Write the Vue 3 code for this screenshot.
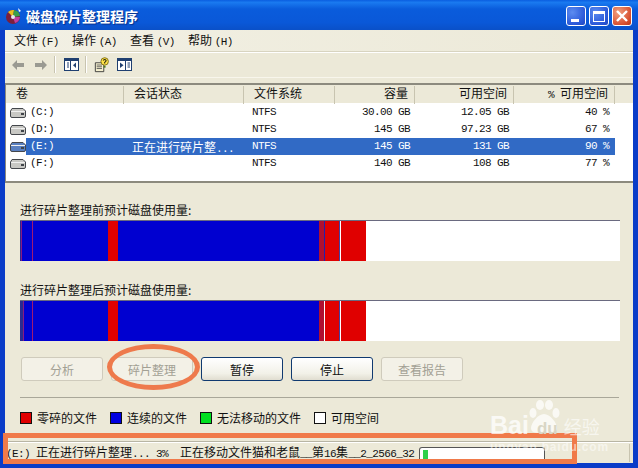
<script setup>
const columns = [
  { label: '卷', cls: 'left' },
  { label: '会话状态', cls: 'left' },
  { label: '文件系统', cls: 'left' },
  { label: '容量', cls: 'right' },
  { label: '可用空间', cls: 'right' },
  { label: '可用空间', pre: '% ', cls: 'right' },
]
const rows = [
  { name: '(C:)', state: '', fs: 'NTFS', cap: '30.00 GB', free: '12.05 GB', pct: '40 %' },
  { name: '(D:)', state: '', fs: 'NTFS', cap: '145 GB', free: '97.23 GB', pct: '67 %' },
  { name: '(E:)', state: '正在进行碎片整', dots: '...', fs: 'NTFS', cap: '145 GB', free: '131 GB', pct: '90 %', selected: true },
  { name: '(F:)', state: '', fs: 'NTFS', cap: '140 GB', free: '108 GB', pct: '77 %' },
]
const segmentsA = [
  [1, '#2a2a90'], [1, '#8a1a80'], [10, '#0000d0'], [1, '#a01a70'], [75, '#0000d0'], [10, '#e00000'],
  [201, '#0000d0'], [5, '#b01030'], [1, '#2020b0'], [14, '#e00000'], [1, '#4040a0'], [1, '#ffffff'], [25, '#e00000'],
]
const segmentsB = [
  [3, '#2a2a90'], [1, '#8a1a80'], [8, '#0000d0'], [1, '#a01a70'], [75, '#0000d0'], [10, '#e00000'],
  [201, '#0000d0'], [5, '#b01030'], [1, '#ffffff'], [14, '#e00000'], [1, '#4040a0'], [1, '#ffffff'], [25, '#e00000'],
]
const graphs = [
  { label: '进行碎片整理前预计磁盘使用量:', segments: segmentsA },
  { label: '进行碎片整理后预计磁盘使用量:', segments: segmentsB },
]
const buttons = [
  { label: '分析', off: true }, { label: '碎片整理', off: true },
  { label: '暂停' }, { label: '停止' }, { label: '查看报告', off: true },
]
const legend = [
  { label: '零碎的文件', color: '#e00000' }, { label: '连续的文件', color: '#0000e0' },
  { label: '无法移动的文件', color: '#00e020' }, { label: '可用空间', color: '#ffffff' },
]
</script>

<template>
  <div class="window">
    <header class="title">
      <svg class="appicon" width="18" height="18" viewBox="0 0 18 18">
        <circle cx="8" cy="10" r="7" fill="#7a1f3d" />
        <path d="M8 10 L3 5 A7 7 0 0 1 9 3 Z" fill="#e8c020" />
        <path d="M8 10 L9 3 A7 7 0 0 1 15 9 Z" fill="#3aa04a" />
        <path d="M8 10 L15 10 A7 7 0 0 1 10 16 Z" fill="#c040a0" />
        <circle cx="8" cy="10" r="2" fill="#e8e8f0" />
        <path d="M13 1 L16 4 L14 5 Z" fill="#fff" />
      </svg>
      <span class="title-text">磁盘碎片整理程序</span>
      <div class="controls">
        <div class="ctl blue"><i class="min"></i></div>
        <div class="ctl blue"><i class="max"></i></div>
        <div class="ctl red">
          <svg width="14" height="14" viewBox="0 0 14 14"><path d="M2 2 L12 12 M12 2 L2 12" stroke="#fff" stroke-width="2.4" /></svg>
        </div>
      </div>
    </header>

    <div class="frame">
      <nav class="menu">
        <span>文件 <small>(F)</small></span>
        <span>操作 <small>(A)</small></span>
        <span>查看 <small>(V)</small></span>
        <span>帮助 <small>(H)</small></span>
      </nav>
      <div class="toolbar">
        <svg width="14" height="12" viewBox="0 0 14 12"><path d="M1 6 L6 1 V4 H13 V8 H6 V11 Z" fill="#9a9a92" /></svg>
        <svg class="next" width="14" height="12" viewBox="0 0 14 12"><path d="M13 6 L8 1 V4 H1 V8 H8 V11 Z" fill="#9a9a92" /></svg>
        <b class="tsep first"></b>
        <svg width="15" height="13" viewBox="0 0 15 13">
          <rect x="0.5" y="0.5" width="14" height="12" fill="#fff" stroke="#1f3f70" />
          <rect x="1" y="1" width="13" height="2" fill="#1f3f70" />
          <path d="M6.5 1 V12" stroke="#1f3f70" />
          <path d="M3 5 H5 M3 7 H5 M3 9 H5" stroke="#1f3f70" />
          <path d="M12 4.5 V10 L9 7.2 Z" fill="#1f3f70" />
        </svg>
        <b class="tsep second"></b>
        <svg width="16" height="16" viewBox="0 0 18 18">
          <path d="M1.5 6.5 H11 V16.5 H1.5 Z" fill="#f6f1d0" stroke="#333" />
          <path d="M3 9 H9 M3 11 H9 M3 13 H9" stroke="#555" />
          <circle cx="12" cy="5" r="4.2" fill="#ffe24a" stroke="#7a6a10" />
          <path d="M10.4 4 Q12 1.8 13.6 3.8 Q13.6 5 12 6 V7.4" fill="none" stroke="#2a2a10" stroke-width="1.2" />
          <path d="M11 10 H13 V12 H11 Z" fill="#4a7a20" />
        </svg>
        <svg class="last" width="15" height="13" viewBox="0 0 15 13">
          <rect x="0.5" y="0.5" width="14" height="12" fill="#fff" stroke="#1f3f70" />
          <rect x="1" y="1" width="13" height="2" fill="#1f3f70" />
          <path d="M8.5 1 V12" stroke="#1f3f70" />
          <path d="M10.5 5 H13 M10.5 7 H13 M10.5 9 H13" stroke="#1f3f70" />
          <path d="M3 4.5 V10 L6.5 7.2 Z" fill="#1f3f70" />
        </svg>
      </div>

      <section class="list">
        <div class="head">
          <div v-for="c in columns" :key="c.label + c.pre" class="hcell" :class="c.cls"><span v-if="c.pre" class="mono">{{ c.pre }}</span>{{ c.label }}</div>
        </div>
        <div class="rows">
          <div v-for="r in rows" :key="r.name" class="row" :class="{ selected: r.selected }">
            <div class="namecell">
              <svg class="drive" width="16" height="10" viewBox="0 0 16 10">
                <path d="M2 0.5 H13 L15.5 3 V8 Q15.5 9.5 14 9.5 H2 Q0.5 9.5 0.5 8 V3 Z" :fill="r.selected ? '#5a80c0' : '#c8c8c4'" stroke="#44474c" />
                <path d="M1 3.5 H15" stroke="#f0f0f0" />
                <rect x="11" y="5" width="3" height="2" fill="#40444a" />
              </svg>
              <span class="mono pick">{{ r.name }}</span>
            </div>
            <div class="cell sel state">{{ r.state }}<span v-if="r.dots" class="mono">{{ r.dots }}</span></div>
            <div class="cell sel mono fs">{{ r.fs }}</div>
            <div class="cell sel mono num">{{ r.cap }}</div>
            <div class="cell sel mono num">{{ r.free }}</div>
            <div class="cell sel mono num pctn">{{ r.pct }}</div>
          </div>
        </div>
      </section>

      <section class="panel">
        <div v-for="g in graphs" :key="g.label" class="graph">
          <div class="glabel">{{ g.label }}</div>
          <div class="bar">
            <span v-for="(s, i) in g.segments" :key="i" :style="{ width: s[0] + 'px', background: s[1] }"></span>
          </div>
        </div>
        <div class="buttons">
          <button v-for="b in buttons" :key="b.label" :class="{ off: b.off }" type="button">{{ b.label }}</button>
        </div>
        <hr class="rule" />
        <div class="legend">
          <div v-for="l in legend" :key="l.label" class="key">
            <i :style="{ background: l.color }"></i>{{ l.label }}
          </div>
        </div>
      </section>

      <footer class="status">
        <span class="stext"><span class="mono">(E:) </span>正在进行碎片整理<span class="mono">... 3%&nbsp;&nbsp;</span>正在移动文件猫和老鼠<span class="mono">__</span>第<span class="mono">16</span>集<span class="mono">__2_2566_32</span></span>
        <div class="progress"><i></i></div>
        <b class="grip"></b>
      </footer>
    </div>

    <div class="ring"></div>
    <div class="box"></div>
    <div class="mark">
      <svg class="paw" width="32" height="34" viewBox="0 0 32 34" fill="#fff" fill-opacity="0.72">
        <ellipse cx="5" cy="13" rx="3.5" ry="5" />
        <ellipse cx="12" cy="5" rx="4" ry="5" />
        <ellipse cx="21" cy="5" rx="4" ry="5" />
        <ellipse cx="28" cy="13" rx="3.5" ry="5" />
        <path d="M16 14 C22 14 29 23 29 28 C29 34 21 33 16 32 C11 33 3 34 3 28 C3 23 10 14 16 14 Z" />
      </svg>
      <div class="brand"><span class="bai">Bai</span><span class="du">du</span><span class="jy">经验</span></div>
      <div class="url">jingyan.baidu.com</div>
    </div>
  </div>
</template>

<style scoped>
.window {
  position: relative;
  width: 638px;
  height: 468px;
  overflow: hidden;
  display: flex;
  flex-direction: column;
  background: #0a3cc8;
  font: 12px "Noto Sans CJK SC", "Liberation Sans", sans-serif;
  color: #111;
}
.title {
  height: 30px;
  flex: none;
  box-sizing: border-box;
  display: flex;
  align-items: center;
  padding: 2px 6px 0 5px;
  background: linear-gradient(#0a5ee0 0, #1a7af0 8%, #0a5cdc 30%, #0a58d8 75%, #0a50c8 100%);
}
.appicon { margin-right: 3px; }
.title-text {
  font-size: 14px;
  font-weight: 700;
  color: #fff;
  text-shadow: 1px 1px 1px #08308a;
}
.controls { margin-left: auto; display: flex; gap: 3px; }
.ctl {
  width: 20px;
  height: 20px;
  box-sizing: border-box;
  border: 1px solid #fff;
  border-radius: 3px;
  position: relative;
  display: flex;
  align-items: center;
  justify-content: center;
}
.blue { background: radial-gradient(circle at 30% 30%, #5c8cf0, #2a58d8 70%, #2048c0); }
.red { background: radial-gradient(circle at 30% 30%, #f0a080, #d85030 70%, #b83818); }
.min { position: absolute; left: 4px; bottom: 3px; width: 8px; height: 3px; background: #fff; }
.max { width: 12px; height: 11px; box-sizing: border-box; border: 1px solid #fff; border-top-width: 3px; }
.frame {
  flex: 1;
  min-height: 0;
  margin: 0 5px 5px 5px;
  display: flex;
  flex-direction: column;
  background: #ece9d8;
}
.menu {
  height: 22px;
  flex: none;
  box-sizing: border-box;
  display: flex;
  align-items: center;
  padding: 0 0 3px 9px;
  background: linear-gradient(90deg, #f2f0e4, #ece9d8);
  border-bottom: 1px solid #d8d4c0;
  box-shadow: 0 1px 0 #fff;
}
.menu span { width: 58px; flex: none; white-space: nowrap; }
.menu small { font: 11px "Liberation Mono", monospace; letter-spacing: -0.6px; }
.toolbar {
  height: 25px;
  flex: none;
  box-sizing: border-box;
  margin-top: 1px;
  display: flex;
  align-items: center;
  padding-left: 6px;
  padding-bottom: 1px;
  border-bottom: 1px solid #f8f6ec;
}
.next { margin-left: 9px; }
.tsep { width: 1px; height: 17px; background: #c8c4b0; box-shadow: 1px 0 0 #fff; }
.tsep.first { margin: 0 9px 0 6px; }
.tsep.second { margin: 0 8px 0 6px; }
.last { margin-left: 7px; }
.list {
  height: 100px;
  flex: none;
  margin-top: 5px;
  box-sizing: border-box;
  border-top: 2px solid #8c8a7e;
  border-left: 1px solid #8c8a7e;
  border-bottom: 2px solid #8c8a7e;
  background: #fff;
  display: flex;
  flex-direction: column;
}
.head {
  height: 18px;
  flex: none;
  display: grid;
  grid-template-columns: 118px 120px 91px 80px 99px 101px;
  background: #ece9d8;
}
.hcell {
  border-right: 1px solid #c8c4b0;
  margin: 1px 0 3px;
  line-height: 14px;
  white-space: nowrap;
}
.hcell.left { padding-left: 10px; }
.hcell.right { text-align: right; padding-right: 6px; }
.rows { padding-top: 1px; }
.row {
  height: 17px;
  display: grid;
  grid-template-columns: 118px 120px 91px 80px 99px 101px;
  align-items: center;
  line-height: 17px;
  width: 609px;
}
.namecell { display: flex; align-items: center; padding-left: 4px; height: 17px; }
.drive { flex: none; }
.pick { flex: 1; padding-left: 4px; height: 17px; }
.cell { height: 17px; white-space: nowrap; }
.state { padding-left: 8px; }
.fs { padding-left: 8px; }
.num { text-align: right; padding-right: 5px; }
.pctn { padding-right: 6px; }
.selected .pick { background: #316ac5; color: #fff; }
.selected .sel { background: #316ac5; color: #fff; }
.mono { font: 11px/17px "Liberation Mono", monospace; letter-spacing: -0.6px; white-space: pre; }
.panel {
  flex: 1;
  min-height: 0;
  padding: 18px 14px 0 15px;
  display: flex;
  flex-direction: column;
}
.graph { flex: none; }
.graph + .graph { margin-top: 20px; }
.glabel { height: 19px; line-height: 18px; white-space: nowrap; }
.bar {
  height: 41px;
  width: 600px;
  background: #fff;
  display: flex;
  border-top: 1px solid #6a6a80;
  box-sizing: border-box;
}
.bar span { flex: none; height: 100%; }
.buttons { display: flex; gap: 8px; margin-top: 16px; padding-left: 1px; }
.buttons button {
  width: 82px;
  height: 24px;
  padding: 0;
  border: 1px solid #103a70;
  border-radius: 3px;
  background: linear-gradient(#fff, #f2f1e8 70%, #e0ddd0);
  font: 12px "Noto Sans CJK SC", sans-serif;
  color: #111;
}
.buttons .off {
  border-color: #cfcbbc;
  background: #f3f1e7;
  color: #a2a094;
}
.rule {
  margin: 16px 0 0;
  height: 1px;
  width: 599px;
  border: 0;
  background: #a9a799;
}
.legend { display: flex; margin-top: 12px; }
.key { display: flex; align-items: center; gap: 5px; line-height: 16px; margin-right: 13px; white-space: nowrap; }
.key i { width: 12px; height: 12px; box-sizing: border-box; border: 1px solid #111; flex: none; }
.status {
  height: 21px;
  flex: none;
  box-sizing: border-box;
  display: flex;
  align-items: center;
  border-top: 1px solid #fff;
  box-shadow: 0 -1px 0 #b8b5a4;
  position: relative;
  white-space: nowrap;
}
.stext { padding-left: 1px; width: 413px; flex: none; line-height: 17px; }
.progress {
  width: 126px;
  height: 15px;
  margin: 3px 0 0 0;
  flex: none;
  box-sizing: border-box;
  border: 1px solid #555;
  border-bottom: 0;
  border-radius: 3px 3px 0 0;
  background: #fff;
  padding: 2px 3px;
}
.progress i { display: block; width: 5px; height: 100%; background: #2ed04a; }
.grip { position: absolute; right: 3px; top: 1px; bottom: 1px; width: 1px; background: #c8c4b0; }
.ring {
  position: absolute;
  left: 107px;
  top: 344px;
  width: 93px;
  height: 46px;
  box-sizing: border-box;
  border: 5px solid #ee7a4c;
  border-radius: 50%;
}
.box {
  position: absolute;
  left: 3px;
  top: 433px;
  width: 574px;
  height: 31px;
  box-sizing: border-box;
  border: 5px solid #f07a4a;
}
.mark {
  position: absolute;
  left: 488px;
  top: 398px;
  width: 120px;
  height: 60px;
  color: #fff;
  pointer-events: none;
}
.paw { position: absolute; left: 40px; top: 2px; }
.brand { position: absolute; left: 2px; top: 17px; height: 20px; line-height: 20px; display: flex; align-items: baseline; }
.bai { font: 700 25px/20px "Liberation Sans", sans-serif; color: rgba(255, 255, 255, 0.75); }
.du { margin-left: 8px; font: 700 17px/20px "Liberation Sans", sans-serif; color: #d9d6c5; }
.jy { margin-left: 6px; font-size: 18px; line-height: 20px; color: rgba(255, 255, 255, 0.6); }
.url { position: absolute; left: 2px; top: 43px; font: 700 12px/12px "Liberation Sans", sans-serif; color: rgba(255, 255, 255, 0.55); letter-spacing: 0.8px; }
</style>

<style>
body { margin: 0; }
</style>
